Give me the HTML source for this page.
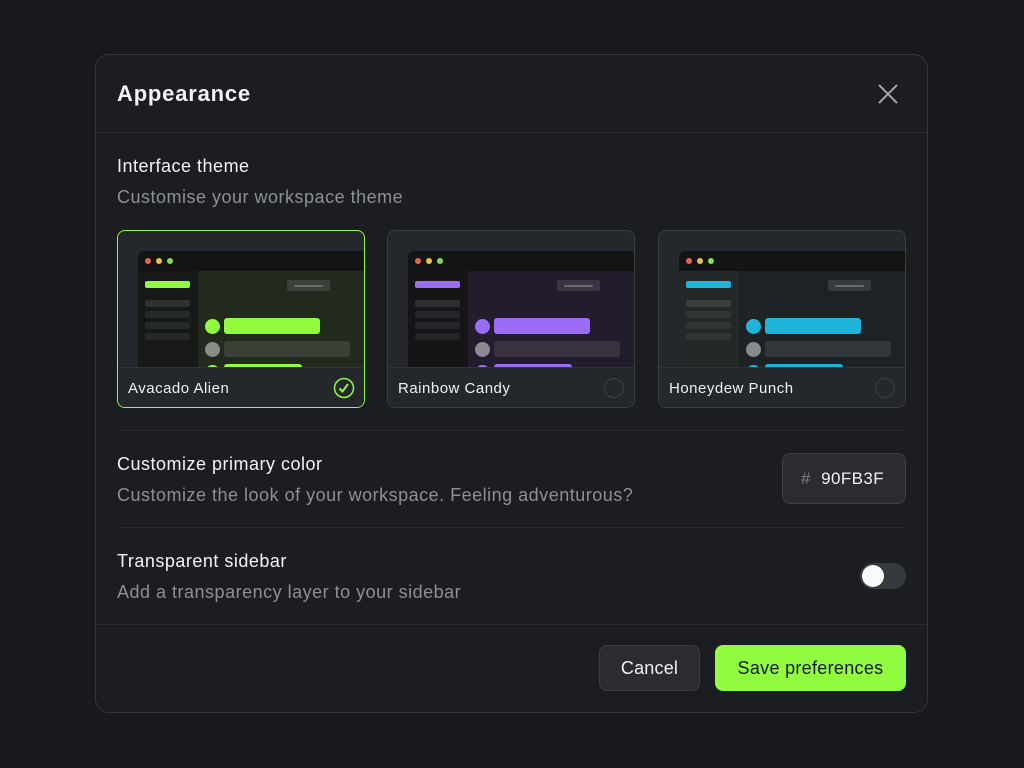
<!DOCTYPE html>
<html><head><style>
*{box-sizing:border-box;margin:0;padding:0}
body{width:1024px;height:768px;background:#17191c;font-family:"Liberation Sans",sans-serif;position:relative;overflow:hidden}
.modal{position:absolute;left:95px;top:54px;width:833px;height:659px;background:#1b1d21;border:1px solid #33363a;border-radius:14px}
.abs{position:absolute}
.t{color:#f2f3f4}
.s{color:#8c9096}
.f{font-size:18px;letter-spacing:0.5px}
.hr{position:absolute;height:1px;background:#2a2d31}
.card{position:absolute;top:230px;width:248px;height:178px;background:#24272b;border:1px solid #3a3d42;border-radius:8px;overflow:hidden}
.win{position:absolute;left:20px;top:20px;width:260px;height:140px;border-radius:6px 0 0 0;overflow:hidden}
.tb{position:absolute;left:0;top:0;width:100%;height:20px;background:#131514}
.dot{position:absolute;top:7px;width:6px;height:6px;border-radius:50%}
.side{position:absolute;left:0;top:20px;width:60px;height:130px}
.main{position:absolute;left:60px;top:20px;width:200px;height:130px}
.b{position:absolute;border-radius:2px}
.lab{position:absolute;left:0;top:136px;width:100%;height:42px;background:#24272b;border-top:1px solid #30343a;font-size:15px;letter-spacing:0.5px;color:#f0f1f2;padding:12px 0 0 10px}
.rad{position:absolute;right:10px;top:10px;width:20px;height:20px;border-radius:50%;border:1px solid #3c4045}
</style></head><body>
<div class="modal"></div>
<div class="abs t" style="left:117px;top:81px;font-size:22px;letter-spacing:0.8px;font-weight:bold">Appearance</div>
<svg class="abs" style="left:876px;top:82px" width="24" height="24"><path d="M3 3L21 21M21 3L3 21" stroke="#a3a7ac" stroke-width="2"/></svg>
<div class="hr" style="left:96px;top:132px;width:831px"></div>
<div class="abs t f" style="left:117px;top:156px">Interface theme</div>
<div class="abs s f" style="left:117px;top:187px">Customise your workspace theme</div>

<div class="card" style="left:117px;border:1.5px solid #90fb3f">
 <div class="win"><div class="tb"><div class="dot" style="left:7px;background:#e8624f"></div><div class="dot" style="left:18px;background:#e8c34a"></div><div class="dot" style="left:29px;background:#7fe04a"></div></div>
 <div class="side" style="background:#161916"><div class="b" style="left:7px;top:10px;width:45px;height:7px;background:#90fb3f"></div><div class="b" style="left:7px;top:29px;width:45px;height:7px;background:#2f3330"></div><div class="b" style="left:7px;top:40px;width:45px;height:7px;background:#262a27"></div><div class="b" style="left:7px;top:51px;width:45px;height:7px;background:#262a27"></div><div class="b" style="left:7px;top:62px;width:45px;height:7px;background:#262a27"></div></div>
 <div class="main" style="background:#222a1d"><div class="b" style="left:89px;top:9px;width:43px;height:11px;background:#3b4039"><div class="b" style="left:7px;top:5px;width:29px;height:2px;background:#6a6f68"></div></div><div class="b" style="left:7px;top:48px;width:15px;height:15px;border-radius:50%;background:#90fb3f"></div><div class="b" style="left:26px;top:47px;width:96px;height:16px;border-radius:3px;background:#90fb3f"></div><div class="b" style="left:7px;top:71px;width:15px;height:15px;border-radius:50%;background:#8a8c88"></div><div class="b" style="left:26px;top:70px;width:126px;height:16px;border-radius:3px;background:#3a4036"></div><div class="b" style="left:7px;top:94px;width:15px;height:15px;border-radius:50%;background:#90fb3f"></div><div class="b" style="left:26px;top:93px;width:78px;height:16px;border-radius:3px;background:#90fb3f"></div></div></div>
 <div class="lab">Avacado Alien<svg class="abs" style="right:9px;top:9px" width="22" height="22"><circle cx="11" cy="11" r="9.5" fill="none" stroke="#90fb3f" stroke-width="1.5"/><path d="M6.5 11.5L9.5 14.5L15 7" fill="none" stroke="#90fb3f" stroke-width="2"/></svg></div>
</div>

<div class="card" style="left:387px">
 <div class="win"><div class="tb"><div class="dot" style="left:7px;background:#e8624f"></div><div class="dot" style="left:18px;background:#e8c34a"></div><div class="dot" style="left:29px;background:#7fe04a"></div></div>
 <div class="side" style="background:#151417"><div class="b" style="left:7px;top:10px;width:45px;height:7px;background:#9b6cf5"></div><div class="b" style="left:7px;top:29px;width:45px;height:7px;background:#2e2d31"></div><div class="b" style="left:7px;top:40px;width:45px;height:7px;background:#252428"></div><div class="b" style="left:7px;top:51px;width:45px;height:7px;background:#252428"></div><div class="b" style="left:7px;top:62px;width:45px;height:7px;background:#252428"></div></div>
 <div class="main" style="background:#221c2d"><div class="b" style="left:89px;top:9px;width:43px;height:11px;background:#3a3540"><div class="b" style="left:7px;top:5px;width:29px;height:2px;background:#6b6670"></div></div><div class="b" style="left:7px;top:48px;width:15px;height:15px;border-radius:50%;background:#9b6cf5"></div><div class="b" style="left:26px;top:47px;width:96px;height:16px;border-radius:3px;background:#9b6cf5"></div><div class="b" style="left:7px;top:71px;width:15px;height:15px;border-radius:50%;background:#8c8990"></div><div class="b" style="left:26px;top:70px;width:126px;height:16px;border-radius:3px;background:#38323f"></div><div class="b" style="left:7px;top:94px;width:15px;height:15px;border-radius:50%;background:#9b6cf5"></div><div class="b" style="left:26px;top:93px;width:78px;height:16px;border-radius:3px;background:#9b6cf5"></div></div></div>
 <div class="lab">Rainbow Candy<div class="rad"></div></div>
</div>

<div class="card" style="left:658px">
 <div class="win"><div class="tb"><div class="dot" style="left:7px;background:#e8624f"></div><div class="dot" style="left:18px;background:#e8c34a"></div><div class="dot" style="left:29px;background:#7fe04a"></div></div>
 <div class="side" style="background:#232829"><div class="b" style="left:7px;top:10px;width:45px;height:7px;background:#1fb5da"></div><div class="b" style="left:7px;top:29px;width:45px;height:7px;background:#3a3f40"></div><div class="b" style="left:7px;top:40px;width:45px;height:7px;background:#303536"></div><div class="b" style="left:7px;top:51px;width:45px;height:7px;background:#303536"></div><div class="b" style="left:7px;top:62px;width:45px;height:7px;background:#303536"></div></div>
 <div class="main" style="background:#1d2325"><div class="b" style="left:89px;top:9px;width:43px;height:11px;background:#363b3d"><div class="b" style="left:7px;top:5px;width:29px;height:2px;background:#666b6d"></div></div><div class="b" style="left:7px;top:48px;width:15px;height:15px;border-radius:50%;background:#1fb5da"></div><div class="b" style="left:26px;top:47px;width:96px;height:16px;border-radius:3px;background:#1fb5da"></div><div class="b" style="left:7px;top:71px;width:15px;height:15px;border-radius:50%;background:#888b8c"></div><div class="b" style="left:26px;top:70px;width:126px;height:16px;border-radius:3px;background:#30373a"></div><div class="b" style="left:7px;top:94px;width:15px;height:15px;border-radius:50%;background:#1fb5da"></div><div class="b" style="left:26px;top:93px;width:78px;height:16px;border-radius:3px;background:#1fb5da"></div></div></div>
 <div class="lab">Honeydew Punch<div class="rad"></div></div>
</div>

<div class="hr" style="left:119px;top:430px;width:787px"></div>
<div class="abs t f" style="left:117px;top:454px">Customize primary color</div>
<div class="abs s f" style="left:117px;top:485px">Customize the look of your workspace. Feeling adventurous?</div>
<div class="abs" style="left:782px;top:453px;width:124px;height:51px;background:#2a2c30;border:1px solid #3c3f44;border-radius:8px;font-size:17px;letter-spacing:0.4px;padding-top:15px;padding-left:18px;color:#f0f1f2"><span style="color:#7d8187">#</span>&nbsp;&nbsp;90FB3F</div>
<div class="hr" style="left:119px;top:527px;width:787px"></div>
<div class="abs t f" style="left:117px;top:551px">Transparent sidebar</div>
<div class="abs s f" style="left:117px;top:582px">Add a transparency layer to your sidebar</div>
<div class="abs" style="left:860px;top:563px;width:46px;height:26px;border-radius:13px;background:#353a40"><div class="abs" style="left:2px;top:2px;width:22px;height:22px;border-radius:50%;background:#fafafa"></div></div>
<div class="hr" style="left:96px;top:624px;width:831px"></div>
<div class="abs" style="left:599px;top:645px;width:101px;height:46px;background:#2a2c30;border:1px solid #3c3f44;border-radius:8px;color:#f0f1f2;font-size:18px;letter-spacing:0.2px;text-align:center;line-height:44px">Cancel</div>
<div class="abs" style="left:715px;top:645px;width:191px;height:46px;background:#90fb3f;border-radius:8px;color:#14180f;font-size:18px;letter-spacing:0.3px;text-align:center;line-height:46px">Save preferences</div>
</body></html>
